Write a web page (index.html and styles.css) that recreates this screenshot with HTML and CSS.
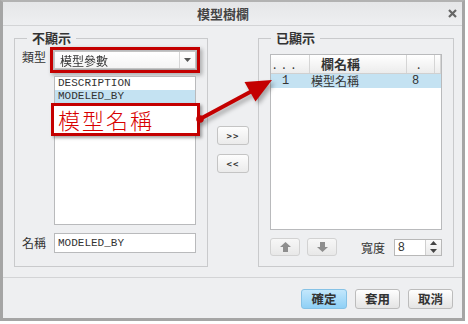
FILE: index.html
```html
<html lang="zh-Hant">
<head>
<title>模型樹欄</title>
<link rel="stylesheet" href="styles.css">
</head>
<body>
  <div class="dialog">
    <div class="titlebar">
      <span class="title">模型樹欄</span>
      <span class="close">
        <svg width="9" height="9" viewBox="0 0 9 9"><path d="M1 1 L8 8 M8 1 L1 8" stroke="#666" stroke-width="2.2"/></svg>
      </span>
    </div>

    <div class="main">
      <fieldset class="group">
        <legend>不顯示</legend>
        <div class="form">
          <label class="lbl lbl-top">類型</label>
          <div class="combo">
            <span class="combo-text">模型參數</span>
            <span class="combo-drop">
              <svg width="7" height="4" viewBox="0 0 7 4"><path d="M0 0 H7 L3.5 4 Z" fill="#555"/></svg>
            </span>
          </div>
          <div class="list">
            <div class="item">DESCRIPTION</div>
            <div class="item sel">MODELED_BY</div>
            <div class="callout">模型名稱</div>
          </div>
          <label class="lbl lbl-mid">名稱</label>
          <input class="field" type="text" value="MODELED_BY">
        </div>
      </fieldset>

      <div class="move">
        <button class="move-btn" type="button">&gt;&gt;</button>
        <button class="move-btn" type="button">&lt;&lt;</button>
      </div>

      <fieldset class="group">
        <legend>已顯示</legend>
        <div class="cols">
          <div class="cols-head">
            <span class="c1 dots">...</span>
            <span class="c2">欄名稱</span>
            <span class="c3">.</span>
            <span class="c4"></span>
          </div>
          <div class="cols-row">
            <span class="c1 num">1</span>
            <span class="c2">模型名稱</span>
            <span class="c3 num">8</span>
            <span class="c4"></span>
          </div>
        </div>
        <div class="tools">
          <button class="icon-btn" type="button">
            <svg width="11" height="10" viewBox="0 0 11 10"><path d="M5.5 0 L11 5 H8 V10 H3 V5 H0 Z" fill="#8e8e8e"/></svg>
          </button>
          <button class="icon-btn down" type="button">
            <svg width="11" height="10" viewBox="0 0 11 10"><path d="M5.5 10 L11 5 H8 V0 H3 V5 H0 Z" fill="#8e8e8e"/></svg>
          </button>
          <span class="width-lbl">寬度</span>
          <div class="spin">
            <span class="spin-val">8</span>
            <span class="spin-arrows">
              <svg width="7" height="4" viewBox="0 0 7 4"><path d="M0 4 H7 L3.5 0 Z" fill="#444"/></svg>
              <svg width="7" height="4" viewBox="0 0 7 4"><path d="M0 0 H7 L3.5 4 Z" fill="#444"/></svg>
            </span>
          </div>
        </div>
      </fieldset>
    </div>

    <div class="footer">
      <button class="btn primary" type="button">確定</button>
      <button class="btn" type="button">套用</button>
      <button class="btn" type="button">取消</button>
    </div>
  </div>

  <!-- annotation arrow drawn over the dialog -->
  <svg class="arrow" width="468" height="324" viewBox="0 0 468 324">
    <line x1="200" y1="119" x2="252" y2="91" stroke="#c40000" stroke-width="4"/>
    <polygon points="244.5,82 272,80 255.5,101.5" fill="#c40000"/>
    <circle cx="200" cy="119" r="3.8" fill="#c40000"/>
  </svg>
</body>
</html>
```

FILE: styles.css
```css
body {
  margin: 0;
  width: 468px;
  height: 324px;
  position: relative;
  background: #fff;
  font-family: "Noto Sans CJK TC", "Liberation Sans", sans-serif;
  font-size: 12px;
  color: #333;
}

.dialog {
  width: 465px;
  height: 321px;
  box-sizing: border-box;
  border: 3px solid #a5a5a5;
  border-top: 2px solid #b2b2b2;
  background: #eeeff1;
  display: flex;
  flex-direction: column;
}

.titlebar {
  height: 24px;
  box-sizing: border-box;
  border-bottom: 1px solid #d3d4d6;
  background: linear-gradient(#e5e6e8, #eeeff1);
  display: flex;
  align-items: center;
}
.title {
  flex: 1;
  text-align: center;
  font-weight: bold;
  font-size: 13px;
  color: #444;
}
.close {
  width: 19px;
  display: flex;
  justify-content: center;
}

.main {
  display: grid;
  grid-template-columns: 194px 50px 196px;
  padding: 4px 8px 0 11px;
}

fieldset.group {
  margin: 0;
  min-width: 0;
  border: 1px solid #c9cacc;
  padding: 5px 0 10px;
}
legend {
  font-weight: bold;
  font-size: 13px;
  line-height: 16px;
  margin-left: 12px;
  padding: 0 5px;
  color: #333;
}

/* left group */
.form {
  display: grid;
  grid-template-columns: 32px 142px;
  padding-left: 7px;
}
.lbl {
  grid-column: 1;
  line-height: 12px;
}
.lbl-top {
  align-self: start;
}
.lbl-mid {
  align-self: center;
  margin-top: 8px;
}

.combo {
  height: 18px;
  box-sizing: border-box;
  border: 1px solid #c4c4c4;
  background: linear-gradient(#fff, #f4f4f4);
  display: flex;
  align-items: center;
  outline: 3px solid #c40000;
  outline-offset: 1px;
  filter: drop-shadow(2px 2px 2px rgba(0, 0, 0, 0.35));
}
.combo-text {
  flex: 1;
  padding-left: 5px;
}
.combo-drop {
  width: 15px;
  height: 100%;
  border-left: 1px solid #d6d6d6;
  display: flex;
  align-items: center;
  justify-content: center;
}

.list {
  grid-column: 2;
  margin-top: 7px;
  height: 149px;
  box-sizing: border-box;
  border: 1px solid #b9babc;
  background: #fff;
  position: relative;
  font-family: "Liberation Mono", monospace;
  font-size: 11px;
  color: #333;
}
.item {
  height: 13px;
  line-height: 13px;
  padding-left: 3px;
}
.item.sel {
  background: #c4e2f2;
}
.callout {
  position: absolute;
  left: -4px;
  top: 26px;
  width: 149px;
  height: 33px;
  box-sizing: border-box;
  border: 3px solid #c40000;
  background: #fff;
  padding-left: 4px;
  font-family: "Noto Sans CJK TC", sans-serif;
  font-weight: 300;
  font-size: 22px;
  line-height: 27px;
  letter-spacing: 2px;
  color: #d80000;
  box-shadow: 2px 2px 3px rgba(0, 0, 0, 0.35);
}

.field {
  grid-column: 2;
  margin-top: 8px;
  height: 20px;
  box-sizing: border-box;
  border: 1px solid #b9babc;
  background: #fff;
  padding: 0 3px;
  font-family: "Liberation Mono", monospace;
  font-size: 11px;
  color: #333;
}

/* middle buttons */
.move {
  display: flex;
  flex-direction: column;
  align-items: center;
  gap: 9px;
  padding-top: 96px;
}
.move-btn {
  width: 32px;
  height: 19px;
  padding: 0;
  border: 1px solid #c4c4c4;
  border-radius: 3px;
  background: linear-gradient(#fdfdfd, #ebebeb);
  font-family: "DejaVu Sans Mono", monospace;
  font-weight: bold;
  font-size: 9px;
  letter-spacing: 1px;
  color: #333;
}

/* right group */
.cols {
  margin: 3px 11px 0;
  height: 176px;
  box-sizing: border-box;
  border: 1px solid #b9babc;
  background: #fff;
}
.cols-head,
.cols-row {
  display: grid;
  grid-template-columns: 39px 97px 28px 1fr;
}
.cols-head {
  height: 19px;
  box-sizing: border-box;
  border-bottom: 1px solid #d0d0d0;
  background: linear-gradient(#fff, #ececec);
  line-height: 18px;
}
.cols-head span {
  border-right: 1px solid #d5d5d5;
}
.cols-head .c2 {
  padding-left: 11px;
  font-weight: bold;
  font-size: 13px;
}
.cols-head .dots {
  padding-left: 2px;
  letter-spacing: 6px;
}
.cols-head .c3 {
  padding-left: 10px;
}
.cols-row {
  height: 14px;
  line-height: 14px;
  background: #c4e2f2;
}
.cols-row .c1 {
  padding-left: 11px;
}
.cols-row .c2 {
  padding-left: 1px;
}
.cols-row .c3 {
  padding-left: 5px;
}
.num {
  font-family: "Liberation Mono", monospace;
  font-size: 12px;
}

.tools {
  display: flex;
  align-items: center;
  height: 18px;
  margin: 8px 11px 0;
}
.icon-btn {
  width: 30px;
  height: 18px;
  padding: 0;
  border: 1px solid #d2d2d2;
  border-radius: 3px;
  background: linear-gradient(#f7f7f7, #e8e8e8);
  display: flex;
  align-items: center;
  justify-content: center;
}
.icon-btn.down {
  margin-left: 7px;
}
.width-lbl {
  margin-left: 24px;
  margin-right: 9px;
}
.spin {
  width: 48px;
  height: 17px;
  box-sizing: border-box;
  border: 1px solid #b8b8b8;
  background: #fff;
  display: flex;
}
.spin-val {
  flex: 1;
  padding-left: 3px;
  font-family: "Liberation Sans", sans-serif;
  line-height: 15px;
}
.spin-arrows {
  width: 15px;
  border-left: 1px solid #cfcfcf;
  background: linear-gradient(#fbfbfb, #e9e9e9);
  display: flex;
  flex-direction: column;
  align-items: center;
  justify-content: space-around;
}

/* bottom buttons */
.footer {
  margin-top: 10px;
  border-top: 1px solid #d3d4d6;
  display: flex;
  justify-content: flex-end;
  gap: 8px;
  padding: 11px 9px 0 0;
}
.btn {
  width: 45px;
  height: 20px;
  padding: 0;
  border: 1px solid #bcbcbc;
  border-radius: 3px;
  background: linear-gradient(#fefefe, #e4e4e4);
  font-family: "Noto Sans CJK TC", sans-serif;
  font-weight: bold;
  font-size: 12.5px;
  line-height: 18px;
  color: #333;
}
.btn.primary {
  width: 46px;
  border-color: #86c2e6;
  background: linear-gradient(#c3e7fc, #8fd0f6);
}

.arrow {
  position: absolute;
  left: 0;
  top: 0;
  pointer-events: none;
  filter: drop-shadow(3px 3px 2px rgba(0, 0, 0, 0.3));
}
```
